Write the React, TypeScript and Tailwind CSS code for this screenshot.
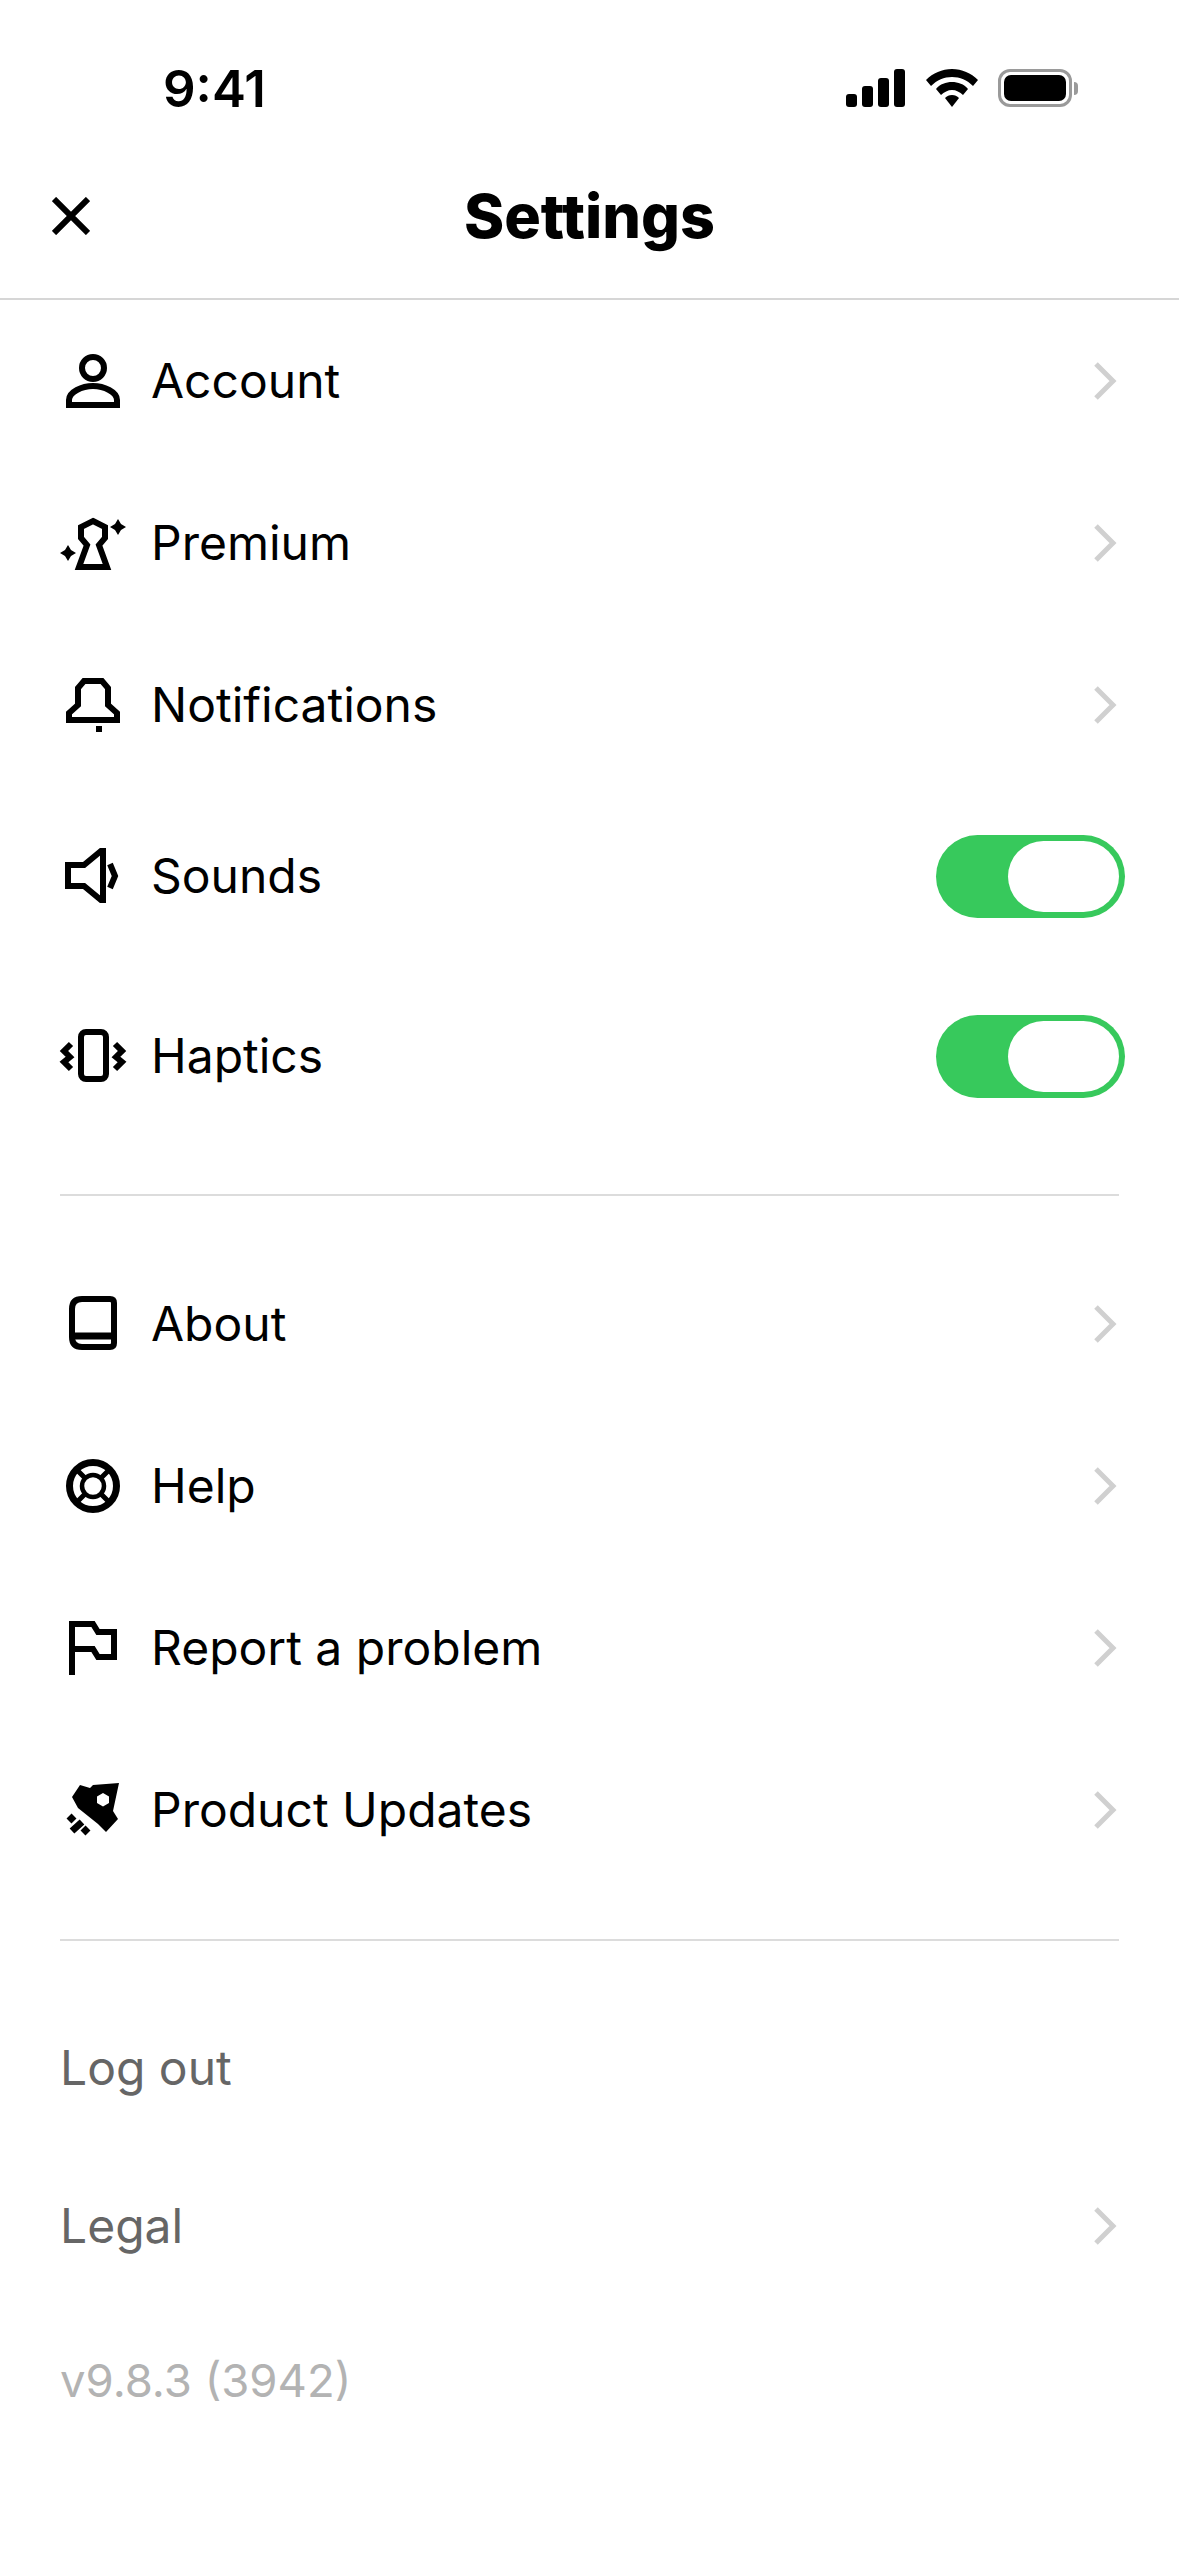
import { ReactNode } from "react";

const fontStack = "font-['Inter','Liberation_Sans',sans-serif]";

const Icon = ({ children }: { children: ReactNode }) => (
  <svg viewBox="0 0 72 72" fill="none" stroke="#000" strokeWidth={6} className="w-[72px] h-[72px] shrink-0">
    {children}
  </svg>
);

const AccountIcon = () => (
  <Icon>
    <circle cx="36" cy="23" r="11" />
    <path d="M12 60V55C12 47 25 41 36 41C47 41 60 47 60 55V60Z" />
  </Icon>
);

const PremiumIcon = () => (
  <Icon>
    <path d="M36 14L48 20V31L42 38L50 60H22L30 38L24 31V20Z" />
    <path stroke="none" fill="#000" d="M61 12L64 17L69 20L64 23L61 28L58 23L53 20L58 17Z" />
    <path stroke="none" fill="#000" d="M11 38L14 43L19 46L14 49L11 54L8 49L3 46L8 43Z" />
  </Icon>
);

const BellIcon = () => (
  <Icon>
    <path d="M12 51V44L21 36V19L27 12H45L51 19V36L60 44V51Z" />
    <rect x="39" y="57" width="6" height="6" fill="#000" stroke="none" />
  </Icon>
);

const SoundIcon = () => (
  <Icon>
    <path d="M46 11H44L27 25H11V46H27L44 60H46Z" />
    <path d="M53 24L58 36L53 48" />
  </Icon>
);

const HapticsIcon = () => (
  <Icon>
    <rect x="24" y="12" width="25" height="47" rx="5" />
    <path d="M14 24L7 31L13 37L7 42L14 49" />
    <path d="M58 24L65 31L59 37L65 42L58 49" />
  </Icon>
);

const BookIcon = () => (
  <Icon>
    <path d="M25 11H53Q57 11 57 15V55Q57 59 53 59H25Q15 59 15 49V21Q15 11 25 11Z" />
    <path d="M15 48H57" strokeWidth={7} />
  </Icon>
);

const HelpIcon = () => (
  <Icon>
    <circle cx="36" cy="36" r="23.5" strokeWidth={7} />
    <circle cx="36" cy="36" r="11" strokeWidth={4.5} />
    <path strokeWidth={5} d="M18 18L28 28M54 18L44 28M18 54L28 44M54 54L44 44" />
  </Icon>
);

const FlagIcon = () => (
  <Icon>
    <path d="M15 63V12H36L41 20H57V45H41L36 37H15" />
  </Icon>
);

const RocketIcon = () => (
  <Icon>
    <path
      stroke="none"
      fill="#000"
      fillRule="evenodd"
      d="M62 9L36 11L33 14L23 11L15 23L21 34L41 50L49 58L61 45L56 37ZM46 19L52 22.5V29L46 32.5L40 29V22.5Z"
    />
    <path strokeWidth={7} d="M12 47L17 42M15 57L25 48M26 59L31 54" />
  </Icon>
);

const Chevron = () => (
  <svg viewBox="0 0 26 42" fill="none" stroke="#d0d0d0" strokeWidth={5} className="w-[26px] h-[42px] shrink-0">
    <path d="M3 4L20 21L3 38" />
  </svg>
);

const Toggle = () => (
  <div className="w-[189px] h-[83px] rounded-full bg-[#37c95c] flex justify-end p-[6px]">
    <div className="w-[111px] h-full rounded-full bg-white" />
  </div>
);

const NavRow = ({ icon, label }: { icon: ReactNode; label: string }) => (
  <div className="h-[162px] pl-[57px] pr-[60px] flex items-center justify-between">
    <div className="flex items-center gap-[22px]">
      {icon}
      <span className="text-[48px] leading-none text-black">{label}</span>
    </div>
    <Chevron />
  </div>
);

const ToggleRow = ({ icon, label }: { icon: ReactNode; label: string }) => (
  <div className="h-[180px] pl-[57px] pr-[54px] flex items-center justify-between">
    <div className="flex items-center gap-[22px]">
      {icon}
      <span className="text-[48px] leading-none text-black">{label}</span>
    </div>
    <Toggle />
  </div>
);

const Divider = () => <div className="mx-[60px] h-[2px] bg-[#dcdcdc]" />;

export default function App() {
  return (
    <div className={`w-[1179px] h-[2556px] bg-white overflow-hidden ${fontStack}`}>
      {/* Status bar */}
      <div className="h-[150px] pt-[26px] pl-[163px] pr-[101px] flex items-center justify-between">
        <span className="text-[51px] leading-none font-semibold text-black">9:41</span>
        <div className="flex items-center gap-[20px]">
          <svg viewBox="0 0 60 38" fill="#000" className="w-[60px] h-[38px]">
            <rect x="0" y="25" width="11" height="13" rx="3" />
            <rect x="16" y="17" width="11" height="21" rx="3" />
            <rect x="32" y="9" width="11" height="29" rx="3" />
            <rect x="48" y="0" width="11" height="38" rx="3" />
          </svg>
          <svg viewBox="0 0 52 38" fill="#000" className="w-[52px] h-[38px]">
            <path d="M26 0C36 0 45 4 52 11L47 17C41 11 34 8 26 8C18 8 11 11 5 17L0 11C7 4 16 0 26 0Z" />
            <path d="M26 13C32 13 38 15 42 20L37 26C34 23 30 21 26 21C22 21 18 23 15 26L10 20C14 15 20 13 26 13Z" />
            <path d="M26 26C29 26 31 27 33 29L26 38L19 29C21 27 23 26 26 26Z" />
          </svg>
          <div className="flex items-center gap-[2px]">
            <div className="w-[74px] h-[38px] rounded-[12px] border-[3px] border-[#9a9a9a] p-[3px]">
              <div className="w-full h-full rounded-[7px] bg-black" />
            </div>
            <div className="w-[4px] h-[13px] rounded-r-full bg-[#9a9a9a]" />
          </div>
        </div>
      </div>

      {/* Nav bar */}
      <div className="h-[150px] pb-[16px] grid grid-cols-[1fr_auto_1fr] items-center border-b-2 border-[#d6d6d6]">
        <div className="pl-[52px]">
          <svg viewBox="0 0 38 38" fill="none" stroke="#000" strokeWidth={6} className="w-[38px] h-[38px]">
            <path d="M2 2L36 36M36 2L2 36" />
          </svg>
        </div>
        <span className="text-[61px] leading-none font-extrabold text-black">Settings</span>
        <div />
      </div>

      <NavRow icon={<AccountIcon />} label="Account" />
      <NavRow icon={<PremiumIcon />} label="Premium" />
      <NavRow icon={<BellIcon />} label="Notifications" />
      <ToggleRow icon={<SoundIcon />} label="Sounds" />
      <ToggleRow icon={<HapticsIcon />} label="Haptics" />

      <div className="mt-[48px]">
        <Divider />
      </div>

      <div className="mt-[47px]">
        <NavRow icon={<BookIcon />} label="About" />
        <NavRow icon={<HelpIcon />} label="Help" />
        <NavRow icon={<FlagIcon />} label="Report a problem" />
        <NavRow icon={<RocketIcon />} label="Product Updates" />
      </div>

      <div className="mt-[48px]">
        <Divider />
      </div>

      <div className="mt-[48px] h-[158px] px-[60px] flex items-center">
        <span className="text-[48px] leading-none text-[#666666]">Log out</span>
      </div>
      <div className="h-[158px] pl-[60px] pr-[60px] flex items-center justify-between">
        <span className="text-[48px] leading-none text-[#666666]">Legal</span>
        <Chevron />
      </div>
      <div className="h-[152px] px-[60px] flex items-center">
        <span className="text-[45.5px] leading-none text-[#b3b3b3]">v9.8.3 (3942)</span>
      </div>
    </div>
  );
}
